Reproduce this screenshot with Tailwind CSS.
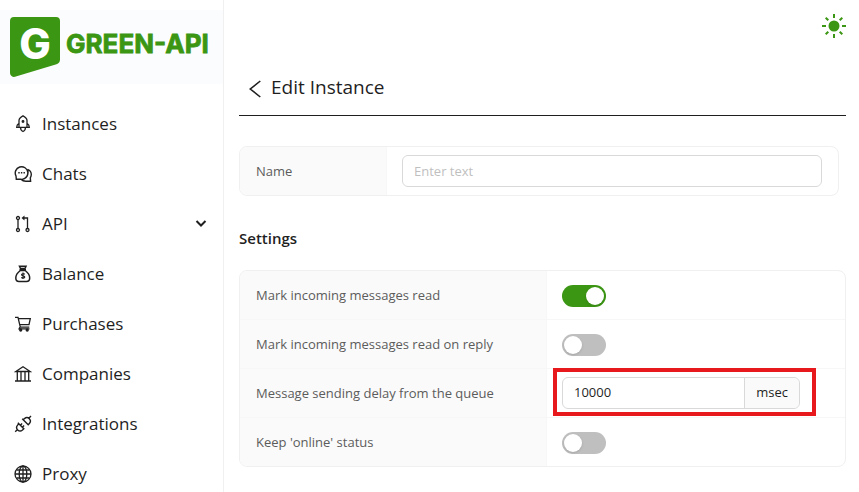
<!DOCTYPE html>
<html lang="en">

<head>
  <meta charset="UTF-8">
  <meta name="viewport" content="width=device-width, initial-scale=1.0">
  <title>Edit Instance - GREEN-API</title>
  <script src="https://cdn.jsdelivr.net/npm/@tailwindcss/browser@4"></script>
</head>

<body class="flex h-screen overflow-hidden bg-white font-['Open_Sans','Noto_Sans',sans-serif] text-[13px] text-[#1f1f1f]">
  <!-- Sidebar -->
  <aside class="w-56 shrink-0 border-r border-[#f0f0f0] pt-2.5">
    <a href="#" aria-label="GREEN-API" class="block bg-[#fbfcfe] pl-2.5 pt-1.5 h-[74px]">
      <svg class="w-[200px] h-[62px]" viewBox="0 0 200 62" fill="#3b9613">
        <path d="M4 1h42a4 4 0 0 1 4 4v38.500a5 5 0 0 1-3.500 4.700L5 60.800a4 4 0 0 1-5-3.900V5a4 4 0 0 1 4-4z" />
        <text x="25" y="43" text-anchor="middle" fill="#fff" font-family="Inter" font-weight="800" font-size="42">G</text>
        <text x="56" y="37" font-family="Inter" font-weight="700" font-size="26" stroke="#3b9613" stroke-width=".8">GREEN-API</text>
      </svg>
    </a>
    <nav class="mt-[15px] text-[17px]">
      <a href="#" class="flex h-[50px] items-center gap-2.5 px-3.5">
        <svg class="size-[18px]" viewBox="0 0 18 18" fill="none" stroke="currentColor" stroke-width="1.300">
          <path d="M5 12.300V5.500C5 3.600 7 1.800 9 .8c2 1 4 2.800 4 4.700v6.800zM5 8.300c-1.500 1-2.300 2.300-2.300 4H5M13 8.300c1.500 1 2.300 2.300 2.300 4H13M6.500 12.500c0 2 1 3.300 2.500 4 1.500-.7 2.500-2 2.500-4" />
          <circle cx="9" cy="6.500" r=".8" />
        </svg>
        Instances
      </a>
      <a href="#" class="flex h-[50px] items-center gap-2.5 px-3.5">
        <svg class="size-[18px]" viewBox="0 0 18 18" fill="none" stroke="currentColor" stroke-width="1.400">
          <path d="M2.300 14.300 2 11A6.300 6.300 0 1 1 7 14.300zM13.600 4.300c2.200.8 3.700 2.900 3.700 5.300 0 1.300-.4 2.300-1 3.300l.3 3.300h-4.800c-2 0-3.600-.7-4.800-2M13.600 4.300c1.200 4.500-.5 8-4.500 9.800" />
          <path d="M4.300 7.700h1.400M6.900 7.700h1.400M9.500 7.700h1.400" stroke-width="1.500" />
        </svg>
        Chats
      </a>
      <a href="#" class="flex h-[50px] items-center gap-2.5 px-3.5">
        <svg class="size-[18px]" viewBox="0 0 18 18" fill="none" stroke="currentColor" stroke-width="1.300">
          <circle cx="4" cy="3" r="1.500" />
          <circle cx="4" cy="15" r="1.500" />
          <circle cx="13.500" cy="15" r="1.500" />
          <path d="M4 4.500v9M13.500 13.500V3H9" />
          <path d="M10.500.5v5L7.500 3z" fill="currentColor" stroke="none" />
        </svg>
        API
        <svg class="ml-auto mr-0.5 size-3" viewBox="0 0 12 12" fill="none" stroke="currentColor" stroke-width="2">
          <path d="M1.500 3 6 7.500 10.500 3" />
        </svg>
      </a>
      <a href="#" class="flex h-[50px] items-center gap-2.5 px-3.5">
        <svg class="size-[18px]" viewBox="0 0 18 18" fill="none" stroke="currentColor" stroke-width="1.500">
          <path d="M6.300 5.500C3.700 7.500 1.800 10.200 1.800 13c0 2.500 1.200 3.500 3.200 3.500h7.500c2 0 3.200-1 3.200-3.500 0-2.800-1.900-5.500-4.500-7.500z" />
          <path d="M5.500 1.300h6.500l-1 2.200h-4.500zM5.500 4.800h6.500" />
          <path d="M10.700 9.300c-.7-.9-3.200-.9-3.200.5 0 1.500 3.300.7 3.300 2.200 0 1.300-2.700 1.400-3.500.4M9 7.500v6.500" stroke-width="1.100" />
        </svg>
        Balance
      </a>
      <a href="#" class="flex h-[50px] items-center gap-2.5 px-3.5">
        <svg class="size-[18px]" viewBox="0 0 18 18" fill="none" stroke="currentColor" stroke-width="1.300">
          <path d="M1 2.300h3l2.300 9.900h9M4.500 3.700h11.800l-1.300 6H5.700M5.800 12.300l-.7 1.500h10.400" />
          <circle cx="6.700" cy="15" r="1" fill="currentColor" />
          <circle cx="13.200" cy="15" r="1" fill="currentColor" />
        </svg>
        Purchases
      </a>
      <a href="#" class="flex h-[50px] items-center gap-2.5 px-3.5">
        <svg class="size-[18px]" viewBox="0 0 18 18" fill="none" stroke="currentColor" stroke-width="1.300">
          <path d="M1.800 6.500 9 1.700l7.200 4.800zM1 16h16M3.300 6.500V16M7 6.500V16M11 6.500V16M14.700 6.500V16" />
        </svg>
        Companies
      </a>
      <a href="#" class="flex h-[50px] items-center gap-2.5 px-3.5">
        <svg class="size-[18px]" viewBox="0 0 18 18" fill="none" stroke="currentColor" stroke-width="1.400">
          <path d="M3.800 7.800 9.800 13.800 8.500 15c-1.500 1.300-3.500 1.200-4.800-.1C2.400 13.600 2.300 11.600 3.600 10.100L4.800 8.800M1.200 16.800l2.300-2.200" />
          <path d="M8.200 3.800l6 6 1.200-1.300c1.300-1.500 1.200-3.500-.1-4.800s-3.300-1.400-4.800-.1L9.200 4.800M14.800 3.300l2.200-2.200M6.300 10.300l1.800-1.800M8.300 12.200l1.800-1.800" />
        </svg>
        Integrations
      </a>
      <a href="#" class="flex h-[50px] items-center gap-2.5 px-3.5">
        <svg class="size-[18px]" viewBox="0 0 18 18" fill="none" stroke="currentColor" stroke-width="1.300">
          <circle cx="9" cy="9" r="8" />
          <ellipse cx="9" cy="9" rx="3.800" ry="8" />
          <path d="M9 1v16M1 9h16M2.500 5h13M2.500 13h13" />
        </svg>
        Proxy
      </a>
    </nav>
  </aside>

  <!-- Content -->
  <main class="min-w-0 flex-1 pt-3.5 pl-[15px] pr-[13px]">
    <div class="flex justify-end">
      <button type="button" aria-label="Switch theme" class="size-6 text-[#3b9613]">
        <svg viewBox="0 0 24 24" fill="none" stroke="currentColor" stroke-width="2">
          <circle cx="12" cy="12" r="5.500" fill="currentColor" stroke="none" />
          <path d="M12 0v4M12 20v4M0 12h4M20 12h4M3.700 3.700l2.600 2.600M17.700 17.700l2.600 2.600M3.700 20.300l2.600-2.600M17.700 6.300l2.600-2.600" />
        </svg>
      </button>
    </div>

    <header class="mt-5 flex h-[58px] items-center gap-2 border-b border-[#1f1f1f] pt-0.5 pl-2">
      <button type="button" aria-label="Back" class="w-4">
        <svg class="h-6 w-4" viewBox="0 0 16 24" fill="none" stroke="currentColor" stroke-width="1.600">
          <path d="M13.300 5 3.300 13l10 8" />
        </svg>
      </button>
      <h1 class="text-[19px]">Edit Instance</h1>
    </header>

    <div class="mt-[30px] mr-[7px] overflow-hidden rounded-lg border border-[#f0f0f0]">
      <table class="w-full table-fixed border-separate border-spacing-0">
        <tr class="h-12">
          <th class="w-[147px] border-r border-[#f7f7f7] bg-[#fafafa] px-4 pt-0.5 text-left font-normal text-[#5c5c5c]"><label for="name">Name</label></th>
          <td class="pl-[15px] pr-4">
            <input id="name" type="text" placeholder="Enter text" class="block h-8 w-full rounded-md border border-[#d9d9d9] px-[11px] outline-none placeholder:text-[#bfbfbf]">
          </td>
        </tr>
      </table>
    </div>

    <h2 class="mt-[30px] mb-5 text-[15px] leading-6 font-semibold">Settings</h2>

    <div class="overflow-hidden rounded-lg border border-[#f0f0f0]">
      <table class="w-full table-fixed border-separate border-spacing-0 text-[#5c5c5c]">
        <tr class="h-[49px]">
          <th class="w-[307px] border-r border-b border-[#f7f7f7] bg-[#fafafa] px-4 pt-0.5 text-left font-normal"><label for="read">Mark incoming messages read</label></th>
          <td class="border-b border-[#f7f7f7] px-[15px] pt-0.5">
            <input id="read" type="checkbox" role="switch" checked class="block h-[22px] w-11 appearance-none rounded-full bg-[#bfbfbf] p-0.5 before:block before:size-[18px] before:rounded-full before:bg-white before:shadow-sm checked:bg-[#3b9613] checked:before:ml-[22px]">
          </td>
        </tr>
        <tr class="h-[49px]">
          <th class="border-r border-b border-[#f7f7f7] bg-[#fafafa] px-4 pt-0.5 text-left font-normal"><label for="reply">Mark incoming messages read on reply</label></th>
          <td class="border-b border-[#f7f7f7] px-[15px] pt-0.5">
            <input id="reply" type="checkbox" role="switch" class="block h-[22px] w-11 appearance-none rounded-full bg-[#bfbfbf] p-0.5 before:block before:size-[18px] before:rounded-full before:bg-white before:shadow-sm checked:bg-[#3b9613] checked:before:ml-[22px]">
          </td>
        </tr>
        <tr class="h-[49px]">
          <th class="border-r border-b border-[#f7f7f7] bg-[#fafafa] px-4 pt-0.5 text-left font-normal"><label for="delay">Message sending delay from the queue</label></th>
          <td class="border-b border-[#f7f7f7] px-[15px]">
            <div class="relative flex h-8 w-[238px] rounded-md border border-[#d9d9d9] text-[#1f1f1f]">
              <input id="delay" type="text" inputmode="numeric" value="10000" class="min-w-0 flex-1 px-[11px] outline-none">
              <span class="flex items-center rounded-r-md border-l border-[#d9d9d9] bg-[#fafafa] px-[11px]">msec</span>
              <!-- highlight frame -->
              <div class="pointer-events-none absolute -top-2.5 -right-[17px] -bottom-2 -left-2.5 border-4 border-[#e8191c]"></div>
            </div>
          </td>
        </tr>
        <tr class="h-12">
          <th class="border-r border-[#f7f7f7] bg-[#fafafa] px-4 pt-0.5 text-left font-normal"><label for="online">Keep 'online' status</label></th>
          <td class="px-[15px] pt-0.5">
            <input id="online" type="checkbox" role="switch" class="block h-[22px] w-11 appearance-none rounded-full bg-[#bfbfbf] p-0.5 before:block before:size-[18px] before:rounded-full before:bg-white before:shadow-sm checked:bg-[#3b9613] checked:before:ml-[22px]">
          </td>
        </tr>
      </table>
    </div>
  </main>
</body>

</html>
